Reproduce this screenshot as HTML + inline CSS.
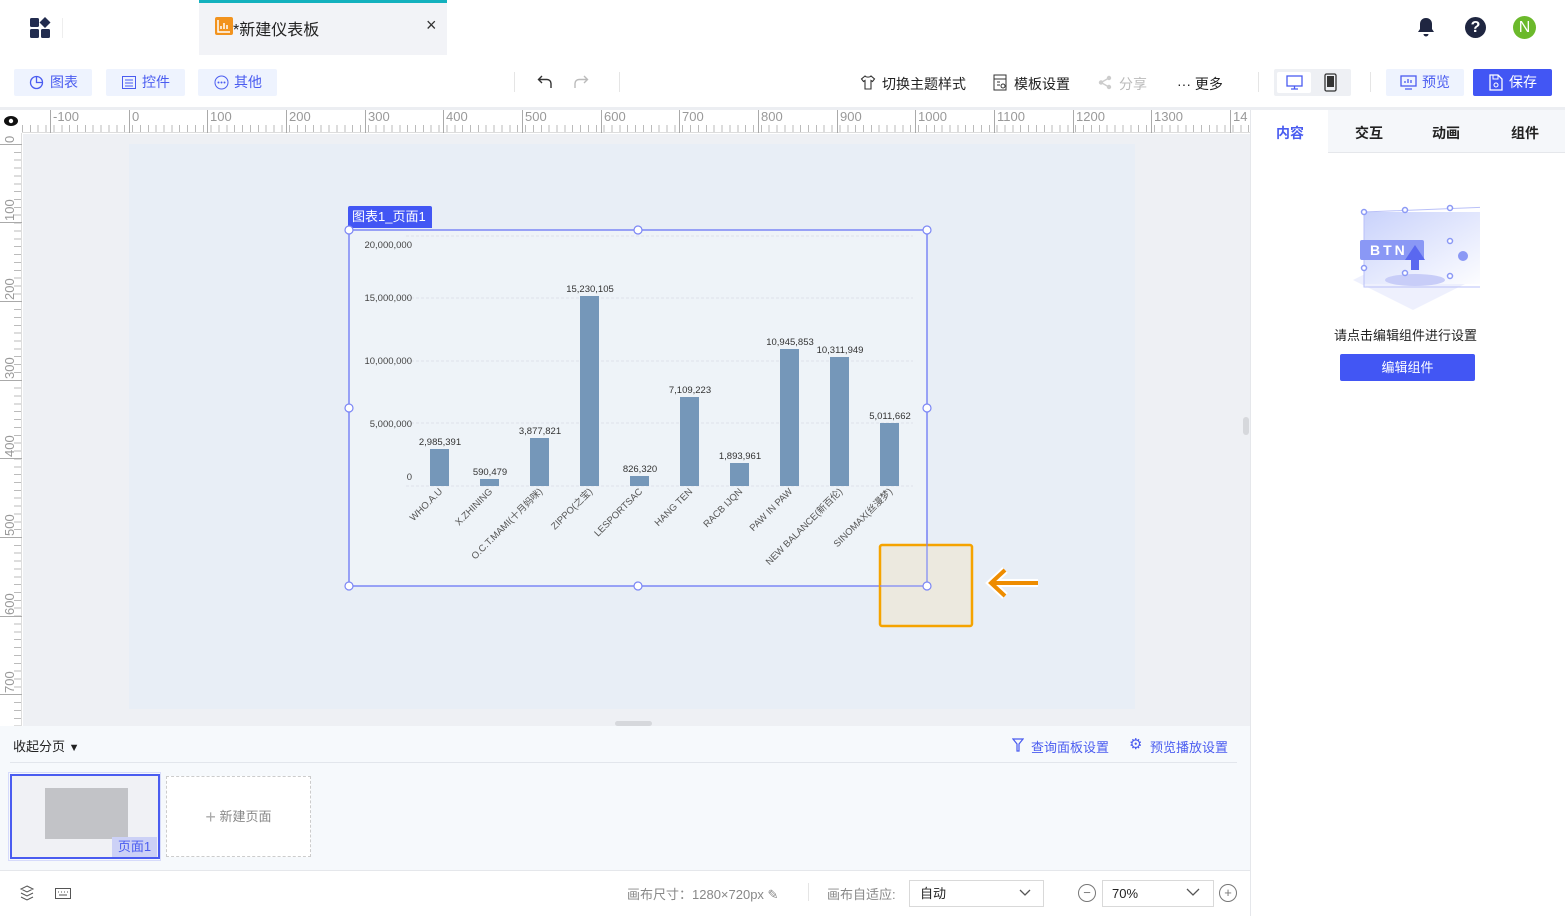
<!DOCTYPE html>
<html><head><meta charset="utf-8"><style>
*{box-sizing:border-box;margin:0;padding:0}
body{width:1565px;height:916px;overflow:hidden;background:#fff;font-family:"Liberation Sans","Noto Sans CJK SC",sans-serif;font-size:13px;color:#222;position:relative}
.a{position:absolute}
.btn{position:absolute;top:69px;height:27px;background:#eef3fe;color:#4a5cf0;font-size:14px;line-height:27px;border-radius:2px;padding-left:36px}
.tb{position:absolute;top:74px;font-size:14px;color:#222}
.hl{position:absolute;top:110px;height:23px;border-left:1px solid #aaa;font-size:13px;color:#999;padding-left:2px;line-height:14px}
.vl{position:absolute;left:0;width:22px;border-top:1px solid #aaa}
.vl span{position:absolute;left:3px;top:-2px;transform-origin:0 0;transform:rotate(-90deg);font-size:13px;color:#999;width:30px;text-align:left;line-height:14px}
</style></head><body>
<!-- header -->
<svg class="a" style="left:30px;top:17px" width="22" height="22" viewBox="0 0 22 22"><rect x="0" y="1" width="9" height="9" rx="1.5" fill="#222c4f"/><path d="M15 0l5.5 5.5L15 11 9.5 5.5z" fill="#222c4f"/><rect x="0" y="12" width="9" height="9" rx="1.5" fill="#222c4f"/><rect x="11" y="12" width="9" height="9" rx="1.5" fill="#222c4f"/></svg>
<div class="a" style="left:62px;top:18px;width:1px;height:20px;background:#eee"></div>
<div class="a" style="left:199px;top:0;width:248px;height:55px;background:#f2f3f7;border-top:3px solid #13b1be"></div>
<div class="a" style="left:215px;top:17px;width:18px;height:18px;background:#f2931e;border-radius:2px"></div>
<svg class="a" style="left:217px;top:19px" width="14" height="14"><path d="M1 1v12h12M4 10V7M7 10V4M10 10V6" stroke="#fff" stroke-width="1.5" fill="none"/></svg>
<div class="a" style="left:233px;top:16px;font-size:16px;color:#222">*新建仪表板</div>
<div class="a" style="left:426px;top:15px;font-size:18px;color:#333">×</div>
<svg class="a" style="left:1416px;top:16px" width="20" height="22"><path d="M10 2c-4 0-6 3-6 6v5l-2 3h16l-2-3V8c0-3-2-6-6-6z M7.5 18a2.5 2.5 0 005 0z" fill="#1f2641"/></svg>
<div class="a" style="left:1465px;top:17px;width:21px;height:21px;border-radius:50%;background:#1f2641;color:#fff;font-weight:bold;font-size:16px;text-align:center;line-height:21px">?</div>
<div class="a" style="left:1513px;top:16px;width:23px;height:23px;border-radius:50%;background:#6bb92b;color:#fff;font-size:16px;text-align:center;line-height:23px">N</div>
<!-- toolbar -->
<div class="btn" style="left:14px;width:78px">图表</div>
<svg class="a" style="left:29px;top:75px" width="15" height="15"><circle cx="7.5" cy="7.5" r="6" stroke="#4a5cf0" fill="none" stroke-width="1.3"/><path d="M7.5 1.5v6h6" stroke="#4a5cf0" fill="none" stroke-width="1.3"/></svg>
<div class="btn" style="left:106px;width:79px">控件</div>
<svg class="a" style="left:122px;top:76px" width="14" height="13"><rect x="0.5" y="0.5" width="13" height="12" stroke="#4a5cf0" fill="none"/><path d="M3 4h8M3 7h8M3 10h8" stroke="#4a5cf0"/></svg>
<div class="btn" style="left:198px;width:79px">其他</div>
<svg class="a" style="left:214px;top:75px" width="15" height="15"><circle cx="7.5" cy="7.5" r="6.5" stroke="#4a5cf0" fill="none"/><circle cx="4.5" cy="7.5" r="1" fill="#4a5cf0"/><circle cx="7.5" cy="7.5" r="1" fill="#4a5cf0"/><circle cx="10.5" cy="7.5" r="1" fill="#4a5cf0"/></svg>
<div class="a" style="left:514px;top:72px;width:1px;height:20px;background:#e5e5e5"></div>
<svg class="a" style="left:537px;top:74px" width="16" height="16"><path d="M5 2L1.5 5.5 5 9M1.5 5.5H10a4 4 0 014 4V14" stroke="#333" fill="none" stroke-width="1.4"/></svg>
<svg class="a" style="left:573px;top:74px" width="16" height="16"><path d="M11 2l3.5 3.5L11 9M14.5 5.5H6a4 4 0 00-4 4V14" stroke="#bbb" fill="none" stroke-width="1.4"/></svg>
<div class="a" style="left:619px;top:72px;width:1px;height:20px;background:#e5e5e5"></div>
<svg class="a" style="left:860px;top:74px" width="16" height="17"><path d="M5 2L1.5 5l2 2.5 1.5-1v8.5h6V6.5l1.5 1 2-2.5L11 2c-1 1.5-5 1.5-6 0z" stroke="#333" fill="none" stroke-width="1.1"/></svg>
<div class="tb" style="left:882px">切换主题样式</div>
<svg class="a" style="left:993px;top:74px" width="15" height="17"><rect x="1" y="1" width="12" height="15" stroke="#333" fill="none"/><path d="M1 5h12M4 8h3M4 11h3" stroke="#333"/><circle cx="10" cy="12" r="2" stroke="#333" fill="none"/></svg>
<div class="tb" style="left:1014px">模板设置</div>
<svg class="a" style="left:1098px;top:75px" width="15" height="15"><circle cx="11" cy="3" r="2.2" fill="#ccc"/><circle cx="3" cy="7.5" r="2.2" fill="#ccc"/><circle cx="11" cy="12" r="2.2" fill="#ccc"/><path d="M11 3L3 7.5 11 12" stroke="#ccc" fill="none" stroke-width="1.4"/></svg>
<div class="tb" style="left:1119px;color:#bbb">分享</div>
<div class="tb" style="left:1177px">··· 更多</div>
<div class="a" style="left:1258px;top:72px;width:1px;height:20px;background:#e5e5e5"></div>
<div class="a" style="left:1274px;top:69px;width:77px;height:27px;background:#eef0f4;border-radius:2px"></div>
<div class="a" style="left:1277px;top:72px;width:34px;height:21px;background:#fff;border-radius:2px"></div>
<svg class="a" style="left:1286px;top:75px" width="17" height="15"><rect x="1" y="1" width="15" height="10" stroke="#4a5cf0" fill="none" stroke-width="1.3"/><path d="M5 14h7M8.5 11v3" stroke="#4a5cf0" stroke-width="1.3"/></svg>
<svg class="a" style="left:1324px;top:73px" width="13" height="19"><rect x="1" y="1" width="11" height="17" rx="1.5" stroke="#333" fill="none" stroke-width="1.3"/><rect x="3" y="3" width="7" height="11" fill="#333"/></svg>
<div class="a" style="left:1370px;top:72px;width:1px;height:20px;background:#e5e5e5"></div>
<div class="btn" style="left:1386px;width:78px;padding-left:36px">预览</div>
<svg class="a" style="left:1400px;top:75px" width="17" height="15"><rect x="1" y="1" width="15" height="10" stroke="#4a5cf0" fill="none" stroke-width="1.3"/><path d="M5 8V6M8 8V4M11 8V5M5 14h7" stroke="#4a5cf0" stroke-width="1.3"/></svg>
<div class="btn" style="left:1473px;width:79px;background:#4256f4;color:#fff;padding-left:36px">保存</div>
<svg class="a" style="left:1489px;top:74px" width="14" height="17"><path d="M1 1h8l4 4v11H1z" stroke="#fff" fill="none" stroke-width="1.3"/><rect x="4" y="1" width="5" height="4" stroke="#fff" fill="none"/><circle cx="7" cy="11" r="2" stroke="#fff" fill="none"/></svg>
<!-- ruler -->
<div class="a" style="left:0;top:107px;width:1565px;height:3px;background:#eceef2"></div>
<div class="a" style="left:22px;top:110px;width:1228px;height:23px;background:#fff;border-bottom:1px solid #ddd;background-image:repeating-linear-gradient(90deg,#bbb 0 1px,transparent 1px 7.86px);background-size:100% 8px;background-repeat:no-repeat;background-position:0 15px"></div>
<div class="a" style="left:0;top:133px;width:22px;height:593px;background:#fff;border-right:1px solid #ddd;background-image:repeating-linear-gradient(180deg,#bbb 0 1px,transparent 1px 7.86px);background-size:8px 100%;background-repeat:no-repeat;background-position:14px 11px"></div>
<div class="a" style="left:0;top:110px;width:22px;height:23px;background:#fff"></div>
<svg class="a" style="left:3px;top:114px" width="16" height="14"><ellipse cx="8" cy="7" rx="7" ry="5" fill="#111"/><circle cx="8" cy="7" r="2.2" fill="#fff"/></svg>
<div class="hl" style="left:50px">-100</div><div class="hl" style="left:129px">0</div><div class="hl" style="left:207px">100</div><div class="hl" style="left:286px">200</div><div class="hl" style="left:365px">300</div><div class="hl" style="left:443px">400</div><div class="hl" style="left:522px">500</div><div class="hl" style="left:601px">600</div><div class="hl" style="left:679px">700</div><div class="hl" style="left:758px">800</div><div class="hl" style="left:837px">900</div><div class="hl" style="left:915px">1000</div><div class="hl" style="left:994px">1100</div><div class="hl" style="left:1073px">1200</div><div class="hl" style="left:1151px">1300</div><div class="hl" style="left:1230px">14</div>
<div class="vl" style="top:144px"><span>0</span></div><div class="vl" style="top:222px"><span>100</span></div><div class="vl" style="top:301px"><span>200</span></div><div class="vl" style="top:380px"><span>300</span></div><div class="vl" style="top:458px"><span>400</span></div><div class="vl" style="top:537px"><span>500</span></div><div class="vl" style="top:616px"><span>600</span></div><div class="vl" style="top:694px"><span>700</span></div>
<!-- canvas -->
<div class="a" style="left:23px;top:134px;width:1227px;height:592px;background:#eef0f4"></div>
<div class="a" style="left:129px;top:144px;width:1006px;height:565px;background:#e8eef6"></div>
<div class="a" style="left:1243px;top:417px;width:6px;height:18px;background:#d6d8dc;border-radius:3px"></div>
<div class="a" style="left:615px;top:721px;width:37px;height:5px;background:#d6d8dc;border-radius:3px"></div>
<div class="a" style="left:348px;top:206px;width:84px;height:22px;background:#4256f4;color:#fff;font-size:13px;line-height:22px;padding-left:4px;border-radius:2px 2px 0 0">图表1_页面1</div>
<svg class="a" style="left:340px;top:220px" width="720" height="420" font-family="Liberation Sans" font-size="10" fill="#333">
<rect x="9" y="10" width="578" height="356" fill="#eef3f8" stroke="#7b86f5" stroke-width="1.5"/>
<g stroke="#dde2ea" stroke-dasharray="3,2"><line x1="66" x2="573" y1="16" y2="16"/><line x1="66" x2="573" y1="78" y2="78"/><line x1="66" x2="573" y1="141" y2="141"/><line x1="66" x2="573" y1="203" y2="203"/><line x1="66" x2="573" y1="266" y2="266"/></g>
<g text-anchor="end" font-size="9.5" fill="#444"><text x="72" y="28">20,000,000</text><text x="72" y="81">15,000,000</text><text x="72" y="144">10,000,000</text><text x="72" y="207">5,000,000</text><text x="72" y="260">0</text></g>
<g fill="#7597b9"><rect x="90" y="229" width="19" height="37"/><rect x="140" y="259" width="19" height="7"/><rect x="190" y="218" width="19" height="48"/><rect x="240" y="76" width="19" height="190"/><rect x="290" y="256" width="19" height="10"/><rect x="340" y="177" width="19" height="89"/><rect x="390" y="243" width="19" height="23"/><rect x="440" y="129" width="19" height="137"/><rect x="490" y="137" width="19" height="129"/><rect x="540" y="203" width="19" height="63"/></g>
<g text-anchor="middle" font-size="9.5"><text x="100" y="225">2,985,391</text><text x="150" y="255">590,479</text><text x="200" y="214">3,877,821</text><text x="250" y="72">15,230,105</text><text x="300" y="252">826,320</text><text x="350" y="173">7,109,223</text><text x="400" y="239">1,893,961</text><text x="450" y="125">10,945,853</text><text x="500" y="133">10,311,949</text><text x="550" y="199">5,011,662</text></g>
<g text-anchor="end" font-size="9.5" fill="#555" font-family="Liberation Sans,Noto Sans CJK SC"><text transform="translate(103,272) rotate(-45)">WHO.A.U</text><text transform="translate(153,272) rotate(-45)">X.ZHINING</text><text transform="translate(203,272) rotate(-45)">O.C.T.MAMI(十月妈咪)</text><text transform="translate(253,272) rotate(-45)">ZIPPO(之宝)</text><text transform="translate(303,272) rotate(-45)">LESPORTSAC</text><text transform="translate(353,272) rotate(-45)">HANG TEN</text><text transform="translate(403,272) rotate(-45)">RACB IJQN</text><text transform="translate(453,272) rotate(-45)">PAW IN PAW</text><text transform="translate(503,272) rotate(-45)">NEW BALANCE(新百伦)</text><text transform="translate(553,272) rotate(-45)">SINOMAX(丝漫梦)</text></g>
<rect x="540" y="325" width="92" height="81" fill="#ece9df" stroke="#f5a300" stroke-width="2.5" rx="2"/>
<line x1="587" y1="310" x2="587" y2="366" stroke="#7b86f5" stroke-width="1.2"/><line x1="540" y1="366" x2="587" y2="366" stroke="#7b86f5" stroke-width="1.2"/>
<g fill="#fff" stroke="#7b86f5" stroke-width="1.2"><circle cx="9" cy="10" r="4"/><circle cx="298" cy="10" r="4"/><circle cx="587" cy="10" r="4"/><circle cx="9" cy="188" r="4"/><circle cx="587" cy="188" r="4"/><circle cx="9" cy="366" r="4"/><circle cx="298" cy="366" r="4"/><circle cx="587" cy="366" r="4"/></g>
<path d="M698 363H652M665 350L651 363L665 376" stroke="#fff" stroke-width="8" fill="none"/>
<path d="M698 363H652M665 350L651 363L665 376" stroke="#ee8c00" stroke-width="4" fill="none"/>
</svg>
<!-- bottom pages -->
<div class="a" style="left:0;top:726px;width:1250px;height:145px;background:#f6f9fc"></div>
<div class="a" style="left:13px;top:736px;font-size:13px;color:#222">收起分页 <span style="font-size:11px">▼</span></div>
<svg class="a" style="left:1012px;top:738px" width="12" height="14"><path d="M1 1h10L7 6v7H5V6z" stroke="#4a5cf0" fill="none" stroke-width="1.2"/></svg>
<div class="a" style="left:1031px;top:737px;font-size:13px;color:#4a5cf0">查询面板设置</div>
<div class="a" style="left:1129px;top:735px;font-size:15px;color:#4a5cf0">⚙</div>
<div class="a" style="left:1150px;top:737px;font-size:13px;color:#4a5cf0">预览播放设置</div>
<div class="a" style="left:10px;top:762px;width:1227px;height:1px;background:#e2e6ec"></div>
<div class="a" style="left:8px;top:772px;width:153px;height:89px;border:1px solid #d6dbfb"></div>
<div class="a" style="left:10px;top:774px;width:150px;height:85px;background:#f0f1f5;border:2px solid #4a5cf0"></div>
<div class="a" style="left:45px;top:788px;width:83px;height:51px;background:#c2c3c7"></div>
<div class="a" style="left:112px;top:837px;width:45px;height:20px;background:#ccd1f6;color:#4a5cf0;font-size:13px;text-align:center;line-height:20px">页面1</div>
<div class="a" style="left:166px;top:776px;width:145px;height:81px;background:#fff;border:1px dashed #ccc;color:#888;font-size:13px;text-align:center;line-height:79px"><span style="font-size:18px;color:#aaa;vertical-align:-2px">+</span> 新建页面</div>
<!-- status bar -->
<div class="a" style="left:0;top:870px;width:1250px;height:1px;background:#e5e7eb"></div>
<svg class="a" style="left:19px;top:885px" width="16" height="16"><path d="M8 1l6 3-6 3-6-3z M2 8l6 3 6-3 M2 12l6 3 6-3" stroke="#555" fill="none"/></svg>
<svg class="a" style="left:55px;top:888px" width="16" height="11"><rect x="0.5" y="0.5" width="15" height="10" stroke="#555" fill="none"/><path d="M3 4h1M6 4h1M9 4h1M12 4h1M4 7h8" stroke="#555"/></svg>
<div class="a" style="left:627px;top:884px;font-size:13px;color:#888">画布尺寸：1280×720px ✎</div>
<div class="a" style="left:808px;top:883px;width:1px;height:18px;background:#e5e5e5"></div>
<div class="a" style="left:827px;top:884px;font-size:13px;color:#888">画布自适应:</div>
<div class="a" style="left:909px;top:880px;width:135px;height:27px;border:1px solid #d9d9d9;background:#fff;font-size:13px;line-height:25px;padding-left:10px">自动</div>
<svg class="a" style="left:1019px;top:889px" width="12" height="8"><path d="M1 1l5 5 5-5" stroke="#555" fill="none" stroke-width="1.3"/></svg>
<div class="a" style="left:1078px;top:884px;width:18px;height:18px;border:1px solid #777;border-radius:50%;text-align:center;line-height:15px;color:#777">−</div>
<div class="a" style="left:1102px;top:880px;width:112px;height:27px;border:1px solid #d9d9d9;background:#fff;font-size:13px;line-height:25px;padding-left:9px">70%</div>
<svg class="a" style="left:1186px;top:888px" width="14" height="9"><path d="M1 1l6 6 6-6" stroke="#555" fill="none" stroke-width="1.3"/></svg>
<div class="a" style="left:1219px;top:884px;width:18px;height:18px;border:1px solid #777;border-radius:50%;text-align:center;line-height:15px;color:#777">+</div>
<!-- right panel -->
<div class="a" style="left:1250px;top:110px;width:1px;height:806px;background:#e5e7eb"></div>
<div class="a" style="left:1251px;top:110px;width:314px;height:43px;background:#f5f7fa;border-bottom:1px solid #e5e7eb"></div>
<div class="a" style="left:1251px;top:110px;width:77px;height:44px;background:#fff"></div>
<div class="a" style="left:1276px;top:123px;font-size:14px;color:#4a5cf0;font-weight:bold">内容</div>
<div class="a" style="left:1355px;top:123px;font-size:14px;font-weight:bold">交互</div>
<div class="a" style="left:1432px;top:123px;font-size:14px;font-weight:bold">动画</div>
<div class="a" style="left:1511px;top:123px;font-size:14px;font-weight:bold">组件</div>
<svg class="a" style="left:1340px;top:200px" width="140" height="110"><defs><linearGradient id="g1" x1="0" y1="0" x2="1" y2="1"><stop offset="0" stop-color="#c9d2fb"/><stop offset="1" stop-color="#fff"/></linearGradient></defs>
<path d="M13 80l60-30 60 30-60 30z" fill="#eef0fd"/><path d="M24 12h127v72H24z" fill="url(#g1)"/><ellipse cx="75" cy="80" rx="30" ry="6" fill="#c8cdf8"/>
<path d="M24 12L151 7v80H24z" stroke="#b9c0f8" fill="none"/><rect x="20" y="40" width="64" height="20" rx="2" fill="#8a98f5"/><text x="30" y="55" fill="#fff" font-family="Liberation Sans" font-weight="bold" font-size="14" letter-spacing="3">BTN</text><path d="M75 45l-10 15h6v10h8V60h6z" fill="#5a68f0"/>
<g fill="#fff" stroke="#8a98f5" stroke-width="1.5"><circle cx="24" cy="12" r="2.5"/><circle cx="65" cy="10" r="2.5"/><circle cx="110" cy="8" r="2.5"/><circle cx="110" cy="41" r="2.5"/><circle cx="24" cy="68" r="2.5"/><circle cx="65" cy="73" r="2.5"/><circle cx="110" cy="76" r="2.5"/></g><circle cx="123" cy="56" r="5" fill="#8a98f5"/></svg>
<div class="a" style="left:1334px;top:325px;font-size:13px;color:#222">请点击编辑组件进行设置</div>
<div class="a" style="left:1340px;top:354px;width:135px;height:27px;background:#4256f4;color:#fff;font-size:13px;text-align:center;line-height:27px;border-radius:2px">编辑组件</div>
</body></html>
